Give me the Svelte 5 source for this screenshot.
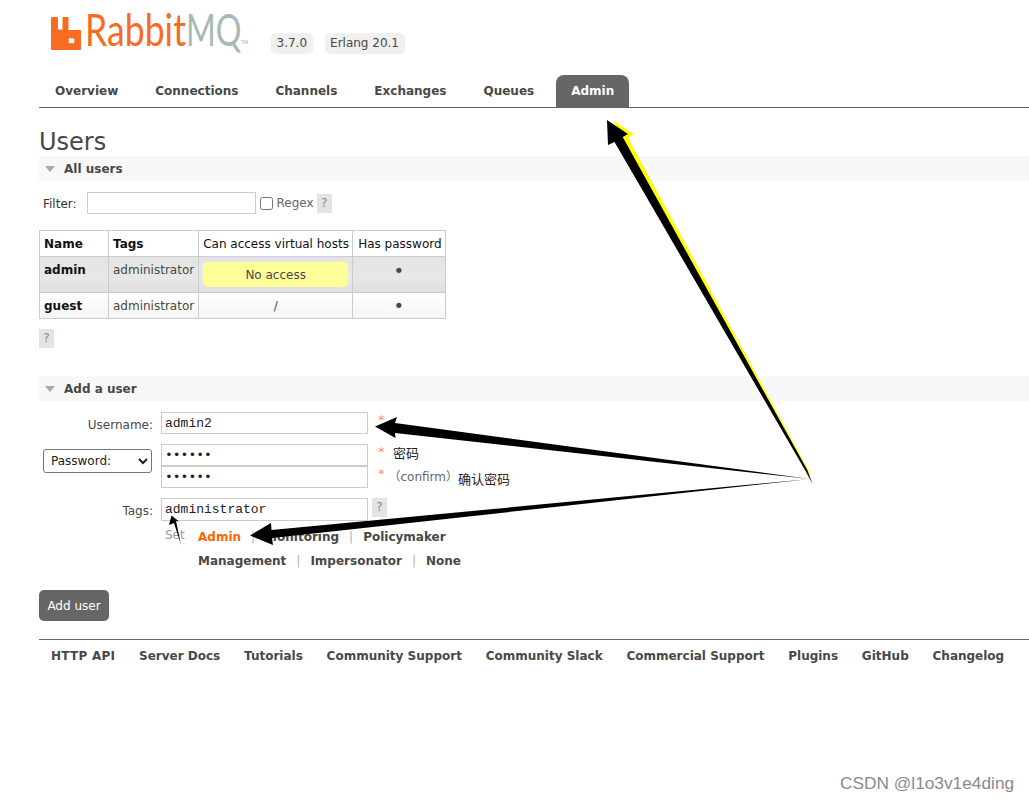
<!-- RabbitMQ management: Admin > Users, with screenshot annotations on top -->
<script lang="ts">
  let tabs = ["Overview", "Connections", "Channels", "Exchanges", "Queues", "Admin"];
  let footer = [
    "HTTP API",
    "Server Docs",
    "Tutorials",
    "Community Support",
    "Community Slack",
    "Commercial Support",
    "Plugins",
    "GitHub",
    "Changelog"
  ];
  let users = [
    { name: "admin", tags: "administrator", vhost: "", cls: "alt1" },
    { name: "guest", tags: "administrator", vhost: "/", cls: "alt2" }
  ];
</script>

<div class="page">
  <header class="top">
    <div class="logo">
      <svg class="mark" viewBox="0 0 30 33" width="30" height="33">
        <path fill="#f76b23" d="M1 0h5.5a1 1 0 0 1 .5 1v11.5h4.5V1a1 1 0 0 1 1-1h4.5a1 1 0 0 1 .5 1v12H29a1 1 0 0 1 1 1v18a1 1 0 0 1-1 1H1a1 1 0 0 1-1-1V1a1 1 0 0 1 1-1z" />
        <rect x="17.7" y="21.3" width="5.6" height="5" rx="1" fill="#fff" />
      </svg>
      <span class="rabbit">Rabbit</span><span class="mq">MQ</span><span class="tm">TM</span>
    </div>
    <span class="ver first">3.7.0</span>
    <span class="ver">Erlang 20.1</span>
  </header>

  <nav class="tabs">
    {#each tabs as t}
      <a class="tab" class:on={t === "Admin"} href="#top">{t}</a>
    {/each}
  </nav>

  <main>
    <h1>Users</h1>

    <div class="bar"><i class="tri"></i>All users</div>
    <div class="filter">
      <label for="flt">Filter:</label>
      <input id="flt" class="flt" type="text" />
      <input id="rgx" class="chk" type="checkbox" />
      <label class="rgx" for="rgx">Regex</label>
      <span class="help">?</span>
    </div>

    <table>
      <thead>
        <tr>
          <th class="b c1">Name</th>
          <th class="b c2">Tags</th>
          <th class="c3">Can access virtual hosts</th>
          <th class="c4">Has password</th>
        </tr>
      </thead>
      <tbody>
        {#each users as u}
          <tr class={u.cls}>
            <td class="b nm">{u.name}</td>
            <td>{u.tags}</td>
            <td class="mid">
              {#if u.vhost}{u.vhost}{:else}<div class="warn">No access</div>{/if}
            </td>
            <td class="mid dot">•</td>
          </tr>
        {/each}
      </tbody>
    </table>
    <span class="help solo">?</span>

    <div class="bar second"><i class="tri"></i>Add a user</div>
    <form class="form" onsubmit={(e) => e.preventDefault()}>
      <label class="lab" for="un">Username:</label>
      <div class="line">
        <input id="un" class="txt" type="text" value="admin2" />
        <span class="req">*</span>
      </div>

      <div class="sel">
        <select>
          <option>Password:</option>
        </select>
      </div>
      <div class="pw">
        <div class="line">
          <input class="txt" type="password" value="secret" />
          <span class="req">*</span>
        </div>
        <div class="line">
          <input class="txt" type="password" value="secret" />
          <span class="req">*</span>
          <span class="conf">（confirm）</span>
        </div>
      </div>

      <label class="lab tg" for="tg">Tags:</label>
      <div class="line tgl">
        <input id="tg" class="txt tall" type="text" value="administrator" />
        <span class="help near">?</span>
      </div>

      <div></div>
      <div class="setrow">
        <span class="set">Set</span>
        <div class="taglist">
          <div><a class="act" href="#top">Admin</a><s>|</s><a href="#top">Monitoring</a><s>|</s><a href="#top">Policymaker</a></div>
          <div><a href="#top">Management</a><s>|</s><a href="#top">Impersonator</a><s>|</s><a href="#top">None</a></div>
        </div>
      </div>
    </form>
    <button class="add" type="button">Add user</button>
  </main>

  <footer class="foot">
    {#each footer as f}
      <a href="#top">{f}</a>
    {/each}
  </footer>

  <!-- annotations drawn over the screenshot -->
  <svg class="marks" viewBox="0 0 1029 801" width="1029" height="801">
    <polygon fill="#ff0" points="612.5,120 633.5,134 628,138 811,475 809.5,475 622,137" />
    <polygon fill="#000" points="607,120 628,134 622.7,137 807.3,470 812.5,484 805,470 614.5,142 608,145" />
    <polygon fill="#000" points="375,426.5 397,417 395,423 810,479 395,433 395.5,438" />
    <polygon fill="#000" points="250,535.5 271,523 271.5,530 810,479 272,538 273,545" />
    <polygon fill="#000" points="171.5,515.5 179,521.5 176,521 181,545 174,523 169,525" />
  </svg>
  <span class="note n1">密码</span>
  <span class="note n2">确认密码</span>
  <span class="mark-text">CSDN @l1o3v1e4ding</span>
</div>

<style>
  :global(body) {
    margin: 0;
    background: #fff;
  }

  .page {
    position: relative;
    width: 1029px;
    height: 801px;
    overflow: hidden;
    font-family: "DejaVu Sans", Verdana, sans-serif;
    font-size: 12px;
    color: #484848;
  }

  .top {
    display: flex;
    align-items: flex-end;
    height: 53px;
    padding: 0 0 0 51px;
  }

  .logo {
    display: flex;
    align-items: flex-end;
    height: 50px;
    margin-bottom: 3px;
    width: 220px;
    flex: none;
    line-height: 1;
  }

  .mark {
    flex: none;
    margin-right: 4px;
  }

  .rabbit,
  .mq {
    font-family: Lato, sans-serif;
    font-weight: 400;
    font-size: 44.5px;
    transform-origin: left bottom;
    display: inline-block;
    line-height: 42px;
  }

  .rabbit {
    color: #f76b23;
    width: 101px;
    transform: scaleX(0.8);
  }

  .mq {
    color: #a9b9b3;
    width: 55px;
    transform: scaleX(0.72);
  }

  .tm {
    font-size: 5px;
    color: #aaa;
    margin-bottom: 5px;
  }

  .ver {
    background: #f0f0f0;
    border-radius: 5px;
    padding: 2px 5.5px;
    height: 17px;
    line-height: 17px;
    margin: 0 0 -1px 12px;
    color: #484848;
  }

  .ver.first {
    margin-left: 0;
  }

  .tabs {
    display: flex;
    height: 32px;
    margin: 22px 0 0 39px;
    border-bottom: 1px solid #666;
    padding-left: 1px;
    gap: 7px;
  }

  .tab {
    padding: 0 15px;
    font-weight: bold;
    font-size: 12px;
    line-height: 33px;
    color: #484848;
    text-decoration: none;
  }

  .tab.on {
    background: #666;
    color: #fff;
    border-radius: 8px 8px 0 0;
  }

  main {
    padding-left: 39px;
  }

  h1 {
    margin: 21px 0 0;
    font-size: 24px;
    font-weight: normal;
    line-height: 27px;
    height: 27px;
    color: #484848;
  }

  .bar {
    display: flex;
    align-items: center;
    height: 25px;
    background: #f8f8f8;
    font-weight: bold;
    font-size: 12px;
    color: #484848;
  }

  .bar.second {
    margin-top: 28px;
  }

  .tri {
    width: 0;
    height: 0;
    margin: 0 9px 0 6px;
    border-left: 5.5px solid transparent;
    border-right: 5.5px solid transparent;
    border-top: 6px solid #aaa;
  }

  .filter {
    display: flex;
    align-items: center;
    height: 22px;
    margin-top: 11px;
    padding-left: 4px;
  }

  .filter label[for="flt"] {
    color: #333;
    padding-top: 1px;
  }

  input.flt {
    box-sizing: border-box;
    width: 169px;
    height: 22px;
    margin: 0 4px 0 10px;
    border: 1px solid #ccc;
    padding: 0 4px;
  }

  .chk {
    margin: 0 4px 0 0;
    width: 13px;
    height: 13px;
  }

  .help {
    display: inline-block;
    width: 15px;
    height: 19px;
    line-height: 19px;
    text-align: center;
    background: #e4e4e4;
    color: #888;
    margin-left: 3px;
  }

  .rgx {
    color: #666;
  }

  table {
    border-collapse: collapse;
    margin-top: 16px;
    font-size: 12px;
  }

  th,
  td {
    border: 1px solid #ccc;
    padding: 0 4px;
    text-align: left;
    font-weight: normal;
    white-space: nowrap;
  }

  thead tr {
    height: 26px;
    color: #111;
  }

  .b {
    font-weight: bold;
    color: #111;
  }

  .c1 {
    width: 60px;
  }

  .c2 {
    width: 81px;
  }

  .c3 {
    width: 146px;
    padding-right: 3px;
  }

  .c4 {
    width: 82px;
    padding: 0 3px 0 5px;
  }

  .alt1 {
    height: 36px;
    background: linear-gradient(#e4e4e4, #e8e8e8 60%, #ddd);
  }

  .alt1 td:nth-child(-n + 2),
  .alt1 .dot {
    vertical-align: top;
    padding-top: 6px;
  }

  .alt1 .dot {
    padding-top: 4px;
  }

  .alt2 {
    height: 26px;
    background: linear-gradient(#fff, #f4f4f4);
  }

  .mid {
    text-align: center;
  }

  .dot {
    font-size: 18px;
    line-height: 20px;
    padding-right: 4px;
  }

  .warn {
    background: #ff9;
    border-radius: 5px;
    height: 25px;
    line-height: 27px;
    text-align: center;
  }

  .solo {
    display: block;
    margin: 10px 0 0;
  }

  .form {
    display: grid;
    grid-template-columns: 114px 1fr;
    column-gap: 8px;
    margin-top: 11px;
  }

  .lab {
    text-align: right;
    color: #484848;
    line-height: 22px;
    height: 22px;
    padding-top: 2px;
    box-sizing: content-box;
    height: 20px;
  }

  .sel {
    padding: 15px 0 0 4px;
  }

  select {
    width: 109px;
    height: 24px;
    padding-left: 3px;
    font-family: "DejaVu Sans", sans-serif;
    font-size: 12px;
    color: #222;
    background: #fff;
    border: 1px solid #767676;
    border-radius: 3px;
  }

  .line {
    display: flex;
    align-items: flex-start;
    height: 22px;
  }

  .pw {
    display: flex;
    flex-direction: column;
    margin: 10px 0 0;
  }

  .tgl {
    margin-top: 10px;
    height: 23px;
  }

  .tg {
    margin-top: 10px;
  }

  .txt {
    box-sizing: border-box;
    width: 207px;
    height: 22px;
    margin: 0;
    border: 1px solid #ccc;
    padding: 0 3px;
    font-family: "Liberation Mono", monospace;
    font-size: 13px;
    color: #222;
  }

  .txt.tall {
    height: 23px;
  }

  .req {
    color: #f88;
    margin-left: 10px;
    font-size: 13px;
    line-height: 16px;
  }

  .conf {
    color: #666;
    margin-left: 4px;
    line-height: 22px;
    font-family: "DejaVu Sans", "Noto Sans CJK SC", sans-serif;
  }

  .near {
    margin-left: 4px;
    height: 19px;
  }

  .setrow {
    display: flex;
    margin-top: 4px;
    padding-left: 4px;
  }

  .set {
    color: #999;
    width: 33px;
    flex: none;
    line-height: 20px;
  }

  .taglist {
    font-weight: bold;
    font-size: 12px;
    line-height: 24px;
  }

  .taglist a {
    color: #484848;
    text-decoration: none;
  }

  .taglist a.act {
    color: #f60;
  }

  .taglist s {
    text-decoration: none;
    font-weight: normal;
    margin: 0 10px;
    color: #a8b4c0;
  }

  .add {
    display: block;
    margin-top: 17px;
    width: 70px;
    height: 31px;
    border: 0;
    border-radius: 5px;
    background: #666;
    color: #fff;
    font-family: "DejaVu Sans", sans-serif;
    font-size: 12px;
    padding: 0;
  }

  .foot {
    display: flex;
    gap: 23.8px;
    margin: 18px 0 0 39px;
    border-top: 1px solid #666;
    padding: 9px 0 0 12px;
    line-height: 15px;
  }

  .foot a {
    font-weight: bold;
    font-size: 12px;
    color: #484848;
    text-decoration: none;
    white-space: nowrap;
  }

  .foot a:first-child {
    letter-spacing: 0.25px;
  }

  .marks {
    position: absolute;
    left: 0;
    top: 0;
    pointer-events: none;
  }

  .note {
    position: absolute;
    font-family: "Noto Sans CJK SC", sans-serif;
    font-size: 13px;
    line-height: 16px;
    color: #222;
  }

  .n1 {
    left: 393px;
    top: 445px;
  }

  .n2 {
    left: 458px;
    top: 471px;
  }

  .mark-text {
    position: absolute;
    left: 840px;
    top: 773px;
    font-family: "Liberation Sans", sans-serif;
    font-size: 17.3px;
    line-height: 20px;
    color: #8a8a8a;
  }
</style>
